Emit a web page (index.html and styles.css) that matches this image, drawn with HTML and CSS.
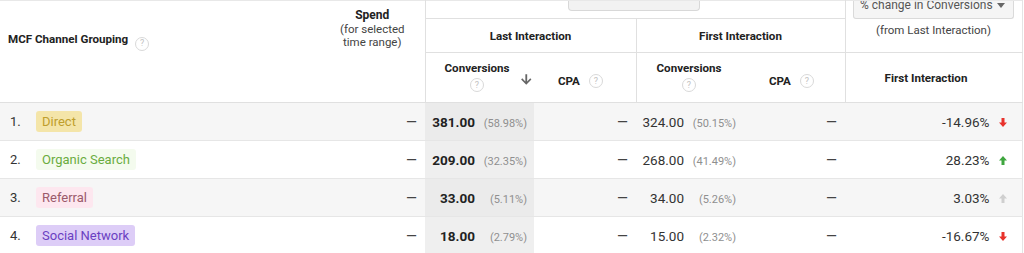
FILE: index.html
```html
<!DOCTYPE html>
<html>
<head>
<meta charset="utf-8">
<link rel="stylesheet" href="styles.css">
</head>
<body>
<table class="mcf">
  <colgroup>
    <col class="c-a"><col class="c-b"><col class="c-c"><col class="c-d"><col class="c-e"><col class="c-f"><col class="c-g">
  </colgroup>
  <thead>
    <tr class="h1">
      <th rowspan="3" class="th-chan"><span class="lbl">MCF Channel Grouping</span><span class="help">?</span></th>
      <th rowspan="3" class="th-spend"><b>Spend</b><br>(for selected<br>time range)</th>
      <th colspan="4" class="th-btn"><div class="tabbtn"></div></th>
      <th rowspan="2" class="th-change">
        <div class="dd"><span class="dd-txt">% change in Conversions</span><span class="caret"></span></div>
        <div class="from">(from Last Interaction)</div>
      </th>
    </tr>
    <tr class="h2">
      <th colspan="2" class="grp grp-last">Last Interaction</th>
      <th colspan="2" class="grp">First Interaction</th>
    </tr>
    <tr class="h3">
      <th class="th-conv th-conv1">
        <div class="conv-wrap">
          <div class="stack"><span class="lbl">Conversions</span><span class="help">?</span></div>
          <svg class="sort" viewBox="0 0 24 24" width="15" height="15"><path d="M20.5 12l-1.9-1.9-5.1 5.1V3.5h-3v11.7l-5.1-5.1L3.5 12l8.5 8.5z"/></svg>
        </div>
      </th>
      <th class="th-cpa th-cpa1"><div class="cpa-wrap"><span class="lbl">CPA</span><span class="help">?</span></div></th>
      <th class="th-conv th-conv2">
        <div class="conv-wrap">
          <div class="stack"><span class="lbl">Conversions</span><span class="help">?</span></div>
        </div>
      </th>
      <th class="th-cpa th-cpa2"><div class="cpa-wrap"><span class="lbl">CPA</span><span class="help">?</span></div></th>
      <th class="th-fi">First Interaction</th>
    </tr>
  </thead>
  <tbody>
    <tr class="odd">
      <td class="chan"><span class="idx">1.</span><span class="tag tag-direct">Direct</span></td>
      <td class="dash">—</td>
      <td class="conv sorted"><b class="num">381.00</b><span class="pct">(58.98%)</span></td>
      <td class="dash">—</td>
      <td class="conv"><span class="num">324.00</span><span class="pct">(50.15%)</span></td>
      <td class="dash">—</td>
      <td class="chg">-14.96%<svg class="arr" viewBox="0 0 8 9" width="8" height="9"><path class="down" d="M2.5 0h3v4.5H8L4 9 0 4.5h2.5z"/></svg></td>
    </tr>
    <tr>
      <td class="chan"><span class="idx">2.</span><span class="tag tag-organic">Organic Search</span></td>
      <td class="dash">—</td>
      <td class="conv sorted"><b class="num">209.00</b><span class="pct">(32.35%)</span></td>
      <td class="dash">—</td>
      <td class="conv"><span class="num">268.00</span><span class="pct">(41.49%)</span></td>
      <td class="dash">—</td>
      <td class="chg">28.23%<svg class="arr" viewBox="0 0 8 9" width="8" height="9"><path class="up" d="M2.5 9h3V4.5H8L4 0 0 4.5h2.5z"/></svg></td>
    </tr>
    <tr class="odd">
      <td class="chan"><span class="idx">3.</span><span class="tag tag-referral">Referral</span></td>
      <td class="dash">—</td>
      <td class="conv sorted"><b class="num">33.00</b><span class="pct">(5.11%)</span></td>
      <td class="dash">—</td>
      <td class="conv"><span class="num">34.00</span><span class="pct">(5.26%)</span></td>
      <td class="dash">—</td>
      <td class="chg">3.03%<svg class="arr" viewBox="0 0 8 9" width="8" height="9"><path class="flat" d="M2.5 9h3V4.5H8L4 0 0 4.5h2.5z"/></svg></td>
    </tr>
    <tr>
      <td class="chan"><span class="idx">4.</span><span class="tag tag-social">Social Network</span></td>
      <td class="dash">—</td>
      <td class="conv sorted"><b class="num">18.00</b><span class="pct">(2.79%)</span></td>
      <td class="dash">—</td>
      <td class="conv"><span class="num">15.00</span><span class="pct">(2.32%)</span></td>
      <td class="dash">—</td>
      <td class="chg">-16.67%<svg class="arr" viewBox="0 0 8 9" width="8" height="9"><path class="down" d="M2.5 0h3v4.5H8L4 9 0 4.5h2.5z"/></svg></td>
    </tr>
  </tbody>
</table>
</body>
</html>
```
FILE: styles.css
```css
html, body {
  margin: 0;
  padding: 0;
  background: #fff;
}
body {
  font-family: Roboto, "Liberation Sans", Arial, sans-serif;
  color: #333;
  overflow: hidden;
}
.mcf {
  border-collapse: collapse;
  table-layout: fixed;
  width: 1022px;
  border-top: 1px solid #e8e8e8;
  border-right: 1px solid #e4e4e4;
}
.c-a { width: 320px; }
.c-b { width: 105px; }
.c-c { width: 109px; }
.c-d { width: 102px; }
.c-e { width: 108px; }
.c-f { width: 101px; }
.c-g { width: 177px; }

th {
  padding: 0;
  font-weight: normal;
  color: #222;
  font-size: 11.5px;
  line-height: 14px;
}
thead th { border-bottom: 1px solid #e0e0e0; }
.h1 { height: 18px; }
.h2 { height: 34px; }
.h3 { height: 50px; }

.th-chan {
  text-align: left;
  vertical-align: top;
  padding: 31px 0 0 8px;
  font-weight: bold;
  font-size: 11.6px;
}
.th-chan .help { margin-left: 7px; vertical-align: -3px; }
.th-spend {
  vertical-align: top;
  text-align: center;
  padding-top: 8px;
  color: #444;
  border-right: 1px solid #e0e0e0;
  font-size: 11.5px;
  line-height: 13.5px;
}
.th-spend b { color: #222; font-size: 12px; }
.th-btn {
  vertical-align: top;
  border-bottom: 1px solid #e0e0e0;
}
.tabbtn {
  width: 130px;
  height: 9px;
  margin: 0 auto;
  background: #f2f2f2;
  border: 1px solid #d8d8d8;
  border-top: none;
  border-radius: 0 0 4px 4px;
  position: relative;
  left: -1px;
}
.th-change {
  vertical-align: top;
  text-align: center;
  border-left: 1px solid #e0e0e0;
  color: #444;
}
.dd {
  width: 161px;
  height: 18px;
  margin: 0 auto;
  background: #f5f5f5;
  border: 1px solid #dadada;
  border-top: none;
  border-radius: 0 0 3px 3px;
  display: flex;
  align-items: flex-start;
  justify-content: space-between;
  padding: 0 8px 0 6px;
  box-sizing: border-box;
  overflow: hidden;
}
.dd-txt {
  font-size: 12px;
  line-height: 12px;
  margin-top: -2px;
  color: #555;
  white-space: nowrap;
}
.caret {
  width: 0;
  height: 0;
  border-left: 4px solid transparent;
  border-right: 4px solid transparent;
  border-top: 5px solid #666;
  margin-top: 2px;
}
.from {
  margin-top: 4px;
  font-size: 11.5px;
}
.grp {
  font-weight: bold;
  text-align: center;
  vertical-align: middle;
  font-size: 11.6px;
}
.grp-last { border-right: 1px solid #e0e0e0; }

.th-conv, .th-cpa {
  vertical-align: top;
  font-weight: bold;
  text-align: left;
  font-size: 11.6px;
}
.th-conv { padding-top: 8px; }
.th-conv1 { padding-left: 19px; }
.th-conv2 { padding-left: 20px; border-left: 1px solid #e0e0e0; }
.conv-wrap { display: flex; align-items: flex-start; }
.stack {
  display: flex;
  flex-direction: column;
  align-items: center;
}
.stack .help { margin-top: 3px; }
.sort {
  fill: #666;
  margin: 11px 0 0 10px;
}
.th-cpa { padding-top: 21px; }
.th-cpa1 { padding-left: 24px; }
.th-cpa2 { padding-left: 25px; border-right: 1px solid #e0e0e0; }
.cpa-wrap { display: flex; align-items: center; gap: 9px; }
.th-fi {
  font-weight: bold;
  text-align: center;
  vertical-align: middle;
  padding-right: 15px;
  font-size: 11.6px;
}

.help {
  display: inline-flex;
  align-items: center;
  justify-content: center;
  width: 14px;
  height: 14px;
  box-sizing: border-box;
  border: 1px solid #d9d9d9;
  border-radius: 50%;
  color: #c2c2c2;
  font-size: 9px;
  font-weight: normal;
  line-height: 1;
}

td {
  height: 37px;
  padding: 0;
  font-size: 13px;
  color: #333;
  border-bottom: 1px solid #e6e6e6;
  vertical-align: middle;
  white-space: nowrap;
}
tbody tr.odd td { background: #f6f6f6; }
td.sorted { background: #efefef; }
tbody tr.odd td.sorted { background: #ebebeb; }

.chan { padding-left: 10px; }
.idx {
  display: inline-block;
  width: 26px;
  color: #333;
}
.tag {
  display: inline-block;
  padding: 0 6px;
  height: 21px;
  line-height: 21px;
  border-radius: 3px;
}
.tag-direct { background: #f4e5a9; color: #bf9e2c; }
.tag-organic { background: #f4fbee; color: #6aac3e; }
.tag-referral { background: #fde7ef; color: #9b5a6b; }
.tag-social { background: #ddcdf7; color: #6a3fc2; }

.dash {
  text-align: right;
  padding-right: 8px;
  color: #444;
  font-size: 14px;
}
.conv {
  text-align: right;
  padding-right: 8px;
}
.sorted { padding-right: 7px; }
.num { font-size: 13.5px; }
b.num { color: #222; }
.pct {
  display: inline-block;
  width: 45px;
  margin-left: 7px;
  text-align: right;
  font-size: 11px;
  color: #8f8f8f;
}
.chg {
  text-align: right;
  padding-right: 15px;
  font-size: 13.5px;
}
.arr { margin-left: 9px; vertical-align: 0; }
.down { fill: #e8322c; }
.up { fill: #3fa63f; }
.flat { fill: #cfcfcf; }
```
